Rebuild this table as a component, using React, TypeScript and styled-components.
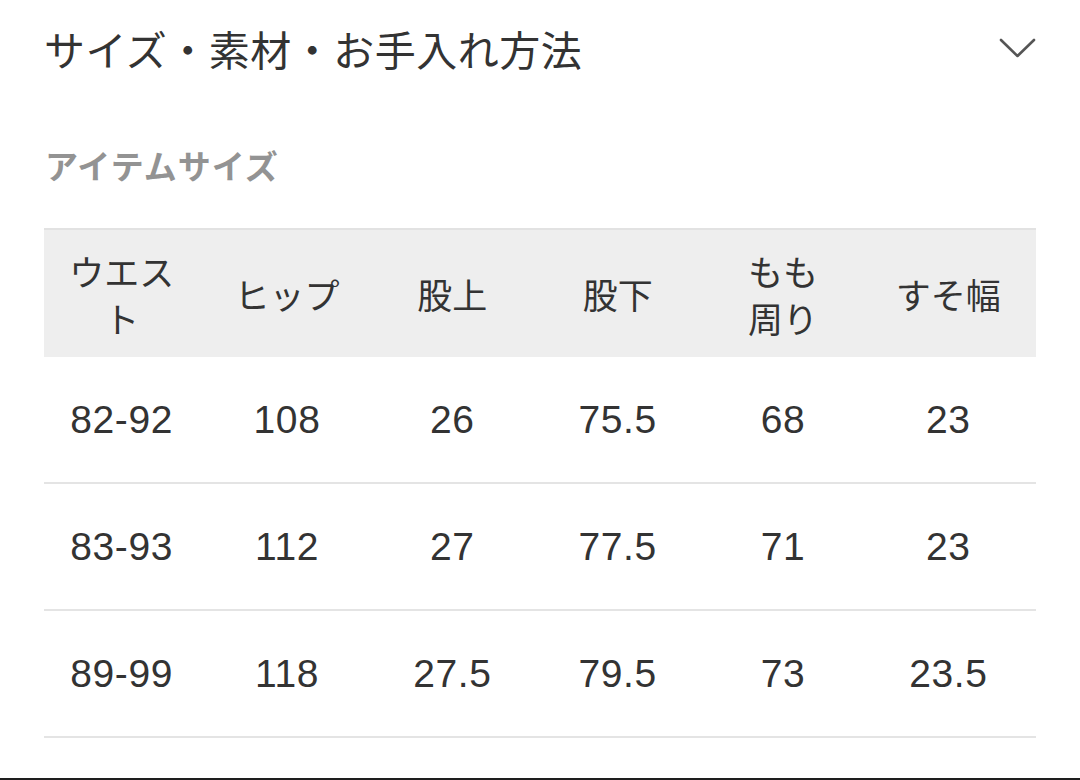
import React from "react";
import styled, { createGlobalStyle } from "styled-components";

const GlobalStyle = createGlobalStyle`
  html, body { margin: 0; padding: 0; background: #ffffff; }
  body { font-family: "Noto Sans CJK JP", "Liberation Sans", sans-serif; color: #333333; }
  * { box-sizing: border-box; }
`;

const Page = styled.div`
  width: 1080px;
  height: 780px;
  padding: 0 44px;
  border-bottom: 2px solid #1e1e1e;
  display: flex;
  flex-direction: column;
  overflow: hidden;
`;

const TitleBar = styled.div`
  height: 96px;
  display: flex;
  align-items: center;
  justify-content: space-between;
`;

const Title = styled.h1`
  margin: 0;
  font-size: 41px;
  font-weight: 400;
  line-height: 1;
  color: #333333;
  letter-spacing: 0.5px;
`;

const Chevron = styled.svg`
  width: 37px;
  height: 20px;
  display: block;
`;

const SubTitle = styled.h2`
  margin: 49px 0 0 1px;
  font-size: 33px;
  line-height: 40px;
  font-weight: 700;
  color: #939393;
  letter-spacing: 1px;
`;

const Table = styled.div`
  margin-top: 43px;
  display: flex;
  flex-direction: column;
`;

const HeadRow = styled.div`
  display: grid;
  grid-template-columns: repeat(6, 1fr);
  height: 129px;
  background: #eeeeee;
  border-top: 2px solid #e2e2e2;
`;

const Row = styled.div`
  display: grid;
  grid-template-columns: repeat(6, 1fr);
  height: 127px;
  border-bottom: 2px solid #e4e4e4;
`;

const Cell = styled.div<{ $head?: boolean }>`
  display: flex;
  align-items: center;
  justify-content: center;
  text-align: center;
  padding: 0 20px 0 10px;
  color: #333333;
  white-space: nowrap;
  font-family: ${(p) =>
    p.$head ? `"Noto Sans CJK JP", sans-serif` : `"Liberation Sans", "Noto Sans CJK JP", sans-serif`};
  font-size: ${(p) => (p.$head ? "35px" : "39px")};
  line-height: ${(p) => (p.$head ? "47px" : "1")};
  letter-spacing: ${(p) => (p.$head ? "0" : "0.6px")};
`;

const headers: string[][] = [["ウエス", "ト"], ["ヒップ"], ["股上"], ["股下"], ["もも", "周り"], ["すそ幅"]];
const rows = [
  ["82-92", "108", "26", "75.5", "68", "23"],
  ["83-93", "112", "27", "77.5", "71", "23"],
  ["89-99", "118", "27.5", "79.5", "73", "23.5"],
];

export default function App() {
  return (
    <>
      <GlobalStyle />
      <Page>
        <TitleBar>
          <Title>サイズ・素材・お手入れ方法</Title>
          <Chevron viewBox="0 0 37 20" fill="none">
            <path d="M2 2 L18.5 18 L35 2" stroke="#555555" strokeWidth="2.6" strokeLinecap="round" strokeLinejoin="round" />
          </Chevron>
        </TitleBar>
        <SubTitle>アイテムサイズ</SubTitle>
        <Table>
          <HeadRow>
            {headers.map((lines, i) => (
              <Cell $head key={i}>
                <span>
                  {lines.map((l, k) => (
                    <React.Fragment key={k}>
                      {k > 0 && <br />}
                      {l}
                    </React.Fragment>
                  ))}
                </span>
              </Cell>
            ))}
          </HeadRow>
          {rows.map((r, i) => (
            <Row key={i}>
              {r.map((v, j) => (
                <Cell key={j}>{v}</Cell>
              ))}
            </Row>
          ))}
        </Table>
      </Page>
    </>
  );
}
